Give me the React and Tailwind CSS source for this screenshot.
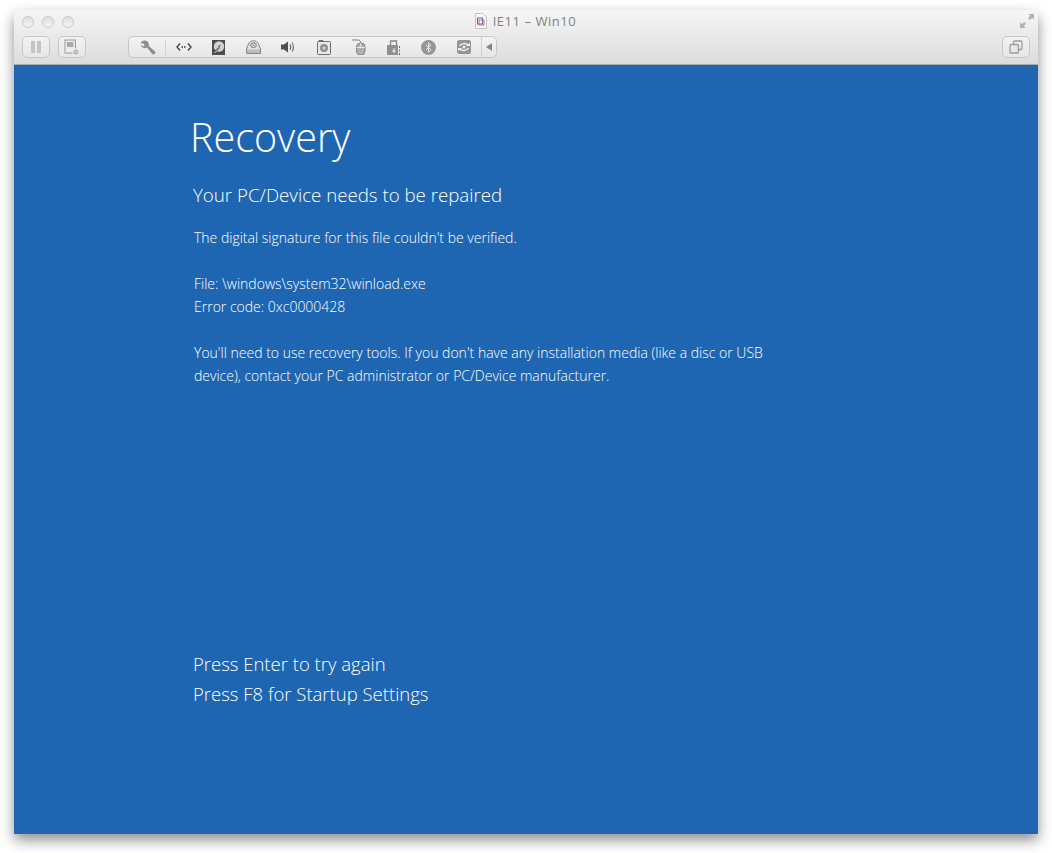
const font = { fontFamily: '"Open Sans", sans-serif' };

const Slot = ({ children, className = "" }) => (
  <span className={`flex w-[35px] items-center justify-center ${className}`}>{children}</span>
);

const WrenchIcon = () => (
  <svg width="16" height="15" viewBox="0 0 16 15">
    <path d="M7.500 1.500C5 -.2 1.500 .5 .6 3.200L3.800 3.800 4.600 6C3.600 6.300 1.800 6.200 .5 4.800 1.200 7.800 4.800 9 7 7.500L12 13.800C13 14.800 15.200 14.500 15.500 12.800 15.600 12 15.200 11.400 14.600 11L8.800 6C9.200 4.200 8.800 2.600 7.500 1.500Z" fill="#8e8e8e" />
  </svg>
);

const NetworkIcon = () => (
  <svg width="16" height="10" viewBox="0 0 16 10" fill="none" stroke="#3f3f3f" strokeWidth="1.300">
    <path d="M4 1.500L1 5 4 8.500M12 1.500L15 5 12 8.500" />
    <path d="M5.500 5H10.500" strokeWidth="1.500" strokeDasharray="1.500 1" />
  </svg>
);

const Disk = () => (
  <svg width="13" height="15" viewBox="0 0 13 15">
    <rect width="13" height="15" fill="#4d4d4d" />
    <circle cx="7" cy="6.500" r="5.200" fill="#d2d2d2" />
    <circle cx="7.500" cy="6" r="1" fill="#666" />
    <path d="M2 13L7.500 7.500" stroke="#4d4d4d" strokeWidth="2" />
    <path d="M2.500 13L8 7.500" stroke="#dcdcdc" strokeWidth="1" />
  </svg>
);

const Optical = () => (
  <svg width="15" height="14" viewBox="0 0 15 14">
    <path d="M.5 13.500V9L2.500 4C4 -.3 11 -.3 12.500 4L14.500 9V13.500Z" fill="#e0e0e0" stroke="#858585" />
    <ellipse cx="7.500" cy="5.200" rx="2.800" ry="2.300" fill="none" stroke="#777" />
    <circle cx="7.500" cy="5.200" r=".8" fill="#777" />
    <path d="M1 9.500H14V13H1Z" fill="#bdbdbd" />
  </svg>
);

const Speaker = () => (
  <svg width="15" height="14" viewBox="0 0 15 14" fill="none">
    <path d="M0 4.500H3L7 1.500V12.500L3 9.500H0Z" fill="#4f4f4f" />
    <path d="M9 4.500C10 6 10 8 9 9.500" stroke="#666" strokeWidth="1.200" />
    <path d="M11 2.500C13 5 13 9 11 11.500" stroke="#777" strokeWidth="1.200" />
  </svg>
);

const Camera = () => (
  <svg width="14" height="15" viewBox="0 0 14 15">
    <rect x="0.500" y="1.500" width="13" height="13" rx="1" fill="#e6e6e6" stroke="#6f6f6f" />
    <path d="M2 1.500V.5H6V1.500" fill="none" stroke="#6f6f6f" />
    <circle cx="7" cy="8" r="4" fill="#8f8f8f" />
    <circle cx="7" cy="8" r="1.500" fill="#d6d6d6" />
  </svg>
);

const Mouse = () => (
  <svg width="14" height="16" viewBox="0 0 14 16">
    <path d="M0 1H6C8 1 8.500 2 8.500 4" fill="none" stroke="#808080" />
    <rect x="4.500" y="4" width="8.500" height="12" rx="4" fill="#b0b0b0" stroke="#808080" />
    <path d="M8.700 4V8.500M4.500 8.500H13" stroke="#e8e8e8" />
  </svg>
);

const Usb = () => (
  <svg width="13" height="15" viewBox="0 0 13 15">
    <path d="M3.500 5V1H9.500V5" fill="none" stroke="#858585" strokeWidth="1.300" />
    <rect x="0" y="5" width="11" height="10" fill="#8f8f8f" />
    <path d="M7 13V8M5 11H9" stroke="#eee" />
    <path d="M12.500 6V15" stroke="#6d6d6d" strokeDasharray="2 1.500" />
  </svg>
);

const BluetoothIcon = () => (
  <svg width="15" height="15" viewBox="0 0 15 15" fill="none">
    <circle cx="7.500" cy="7.500" r="7.500" fill="#969696" />
    <path d="M4.800 5L10 9.800 7.500 12.200V2.800L10 5.200 4.800 10" stroke="#e8e8e8" />
  </svg>
);

const Share = () => (
  <svg width="14" height="14" viewBox="0 0 14 14">
    <rect width="14" height="14" rx="2.500" fill="#949494" />
    <path d="M2.500 6C3.500 3.500 9 2.500 11 5M11.500 8C10.500 10.500 5 11.500 3 9" fill="none" stroke="#efefef" strokeWidth="1.400" />
    <path d="M8.500 6H13V3ZM5.500 8H1V11Z" fill="#efefef" />
    <circle cx="7" cy="7" r="1.500" fill="#efefef" />
  </svg>
);

const SnapshotIcon = () => (
  <svg width="16" height="17" viewBox="0 0 16 17">
    <rect x="1" y="1" width="10.500" height="13" fill="#ececec" stroke="#9a9a9a" />
    <rect x="3" y="3" width="6.500" height="5" fill="#ababab" />
    <circle cx="12" cy="13" r="3.200" fill="#b4b4b4" stroke="#f0f0f0" />
    <path d="M12 11.500V13H13.500" fill="none" stroke="#f0f0f0" strokeWidth=".8" />
  </svg>
);

const CopyIcon = () => (
  <svg width="14" height="14" viewBox="0 0 14 14" fill="none" stroke="#9b9b9b" strokeWidth="1.300">
    <rect x="4.500" y="1" width="8.500" height="8.500" rx="1" />
    <rect x="1" y="4.500" width="8.500" height="8.500" rx="1" fill="#e8e8e8" />
  </svg>
);

const FullscreenIcon = () => (
  <svg width="14" height="14" viewBox="0 0 15 15" fill="#b2b2b2">
    <path d="M9 0H15V6L13 4 10.500 6.500 8.500 4.500 11 2Z" />
    <path d="M0 15V9L2 11 4.500 8.500 6.500 10.500 4 13 6 15Z" />
  </svg>
);

const Dot = () => (
  <span className="size-[12px] rounded-full border border-[#c8c8c8] bg-gradient-to-b from-[#dedede] to-[#f4f4f4]" />
);

const tools = [
  <NetworkIcon />,
  <Disk />,
  <Optical />,
  <Speaker />,
  <Camera />,
  <Mouse />,
  <Usb />,
  <BluetoothIcon />,
  <Share />,
];

const btn = "flex h-[22px] items-center justify-center rounded-[5px] border border-[#c6c6c6] bg-gradient-to-b from-[#f3f3f3] to-[#e6e6e6]";

export default function App() {
  return (
    <div className="h-[853px] overflow-hidden bg-white px-[14px] pt-[10px]" style={font}>
      <div className="flex h-[824px] flex-col overflow-hidden rounded-t-[5px] shadow-[0_6px_14px_rgba(0,0,0,0.45)]">
        <header className="h-[55px] shrink-0 border-b border-[#a9a9a9] bg-gradient-to-b from-[#f6f6f6] to-[#dcdcdc] px-2">
          <div className="relative flex h-[26px] items-center">
            <div className="-mt-[3px] flex gap-[8px]">
              <Dot />
              <Dot />
              <Dot />
            </div>
            <div className="absolute inset-x-0 top-[3px] flex items-center justify-center gap-[6px] pr-[1px]">
              <svg width="12" height="16" viewBox="0 0 12 16">
                <path d="M.5.500H8L11.500 4V15.500H.5Z" fill="#fafafa" stroke="#c4c4c4" />
                <rect x="2.500" y="5" width="5" height="6" fill="none" stroke="#4a70b8" />
                <rect x="4" y="7" width="5" height="5" fill="none" stroke="#d8607a" />
              </svg>
              <span className="text-[13px] leading-none tracking-[0.55px] text-[#808080]">IE11 – Win10</span>
            </div>
            <div className="-mr-[4px] -mt-[4px] ml-auto">
              <FullscreenIcon />
            </div>
          </div>
          <div className="flex items-center">
            <div className={`${btn} w-[28px] gap-[2px]`}>
              <span className="h-[12px] w-[4px] bg-[#c4c4c4]" />
              <span className="h-[12px] w-[4px] bg-[#c4c4c4]" />
            </div>
            <div className={`${btn} ml-[8px] w-[28px]`}>
              <SnapshotIcon />
            </div>
            <div className={`${btn} ml-[42px] w-[369px] pl-[1px]`}>
              <Slot className="w-[36px] border-r border-[#cfcfcf]">
                <WrenchIcon />
              </Slot>
              {tools.map((tool, i) => (
                <Slot key={i}>{tool}</Slot>
              ))}
              <span className="ml-auto flex h-full w-[15px] items-center justify-center border-l border-[#cfcfcf]">
                <span className="h-0 w-0 border-y-[4px] border-r-[6px] border-y-transparent border-r-[#858585]" />
              </span>
            </div>
            <div className={`${btn} ml-auto w-[28px]`}>
              <CopyIcon />
            </div>
          </div>
        </header>
        <main className="flex min-h-0 flex-1 flex-col bg-[#1f66b2] pl-[179px] text-white">
          <h1 className="mt-[42px] -ml-[3px] text-[39.500px] font-light leading-[60px]">Recovery</h1>
          <h2 className="mt-[14px] text-[18.700px] font-light leading-[28px]">Your PC/Device needs to be repaired</h2>
          <div className="ml-[1px] mt-[17px] w-[600px] text-[14px] font-light leading-[23px]">
            <p>The digital signature for this file couldn't be verified.</p>
            <p className="mt-[23px]">File: \windows\system32\winload.exe</p>
            <p>Error code: 0xc0000428</p>
            <p className="mt-[23px]">
              You'll need to use recovery tools. If you don't have any installation media (like a disc or USB device), contact your PC administrator or PC/Device manufacturer.
            </p>
          </div>
          <div className="mt-[262px] text-[18.500px] font-light leading-[30px]">
            <p>Press Enter to try again</p>
            <p>Press F8 for Startup Settings</p>
          </div>
        </main>
      </div>
    </div>
  );
}
